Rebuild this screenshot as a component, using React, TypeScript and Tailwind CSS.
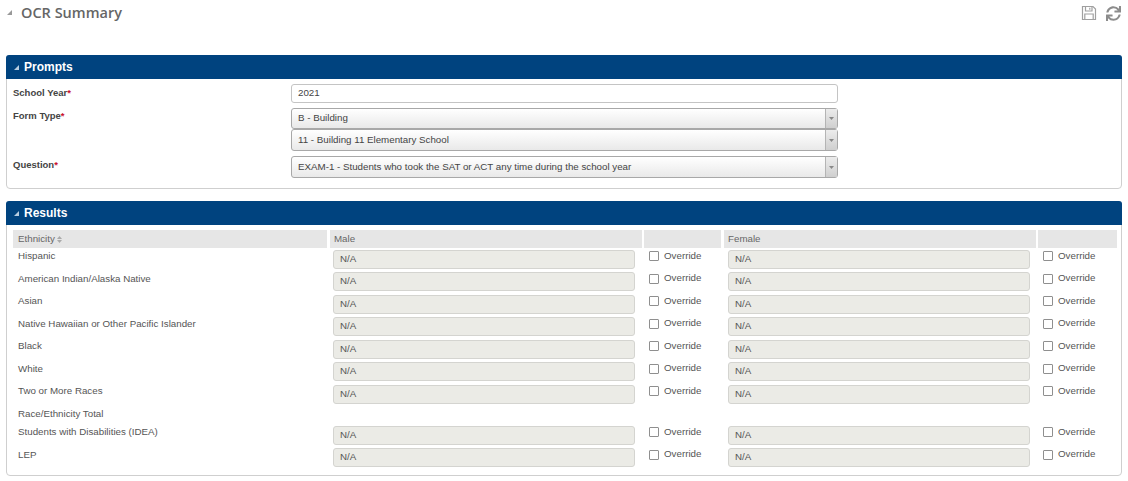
import { FaSync } from "react-icons/fa";

const rows = [
  { name: "Hispanic", inputs: true },
  { name: "American Indian/Alaska Native", inputs: true },
  { name: "Asian", inputs: true },
  { name: "Native Hawaiian or Other Pacific Islander", inputs: true },
  { name: "Black", inputs: true },
  { name: "White", inputs: true },
  { name: "Two or More Races", inputs: true },
  { name: "Race/Ethnicity Total", inputs: false },
  { name: "Students with Disabilities (IDEA)", inputs: true },
  { name: "LEP", inputs: true },
];

function Arrow({ color }: { color: string }) {
  return (
    <svg width="7" height="7" viewBox="0 0 7 7" className="shrink-0">
      <polygon points="6,1 6,6 1,6" fill={color} />
    </svg>
  );
}

function SaveIcon() {
  return (
    <svg width="16" height="16" viewBox="0 0 16 16" fill="none" stroke="#a0a0a0" strokeWidth="1.2">
      <path d="M1.5 1.5h10.5l2.5 2.5v10.5h-13z" />
      <path d="M4.5 1.5v4.5h6.5v-4.5" />
      <path d="M3.8 14.5v-5.5h8.4v5.5" />
      <path d="M8.8 2.8v2" />
    </svg>
  );
}

function Required({ label }: { label: string }) {
  return (
    <span className="text-[9.5px] font-bold text-[#444] leading-none">
      {label}
      <span className="text-[#c8102e]">*</span>
    </span>
  );
}

function Select({ value, className }: { value: string; className: string }) {
  return (
    <div
      className={`flex w-[547px] rounded-[3px] border border-[#a8a8a8] bg-gradient-to-b from-white to-[#e9e9e9] ${className}`}
    >
      <span className="flex-1 self-center pl-[6px] text-[9.75px] text-[#444]">{value}</span>
      <span className="flex w-[12px] items-center justify-center border-l border-[#b4b4b4] bg-gradient-to-b from-[#ececec] to-[#cfcfcf]">
        <svg width="5" height="3" viewBox="0 0 5 3">
          <polygon points="0,0 5,0 2.5,3" fill="#888" />
        </svg>
      </span>
    </div>
  );
}

function Panel({ title, className, children }: { title: string; className: string; children: React.ReactNode }) {
  return (
    <section className={`mx-[6px] rounded-[4px] border border-[#cfcfcf] ${className}`}>
      <div className="-mx-px -mt-px flex h-[24px] items-center gap-[4px] rounded-t-[3px] bg-[#00437f] pl-[7px]">
        <Arrow color="#b8cde0" />
        <h2 className="text-[12px] font-bold text-white">{title}</h2>
      </div>
      {children}
    </section>
  );
}

function ValueCell() {
  return (
    <div className="flex items-center pl-[6px]">
      <div className="flex h-[19px] w-[302px] items-center rounded-[3px] border border-[#d4d4d0] bg-[#ebebe6] pl-[6px] text-[9.75px] text-[#555]">
        N/A
      </div>
    </div>
  );
}

function OverrideCell() {
  return (
    <label className="-mt-[6px] flex items-center gap-[5px] pl-[6px] text-[9.75px] text-[#555]">
      <input
        type="checkbox"
        className="h-[10px] w-[10px] appearance-none rounded-[1px] border border-[#8f8f8f] bg-white"
      />
      Override
    </label>
  );
}

const gridCols = "grid grid-cols-[314px_316px_79px_315px_80px]";

export default function App() {
  return (
    <div className="h-[481px] w-[1128px] overflow-hidden bg-white font-['Liberation_Sans',sans-serif]">
      <header className="flex h-[55px] items-start justify-between pl-[6px] pr-[7px] pt-[2px]">
        <div className="flex items-center gap-[8px]">
          <Arrow color="#999" />
          <h1 className="font-['Open_Sans',sans-serif] text-[14.5px] font-semibold text-[#666]">OCR Summary</h1>
        </div>
        <div className="flex items-center gap-[9px] pt-[3px] text-[#8c8c8c]">
          <SaveIcon />
          <FaSync size={15} />
        </div>
      </header>

      <Panel title="Prompts" className="h-[134px]">
        <div className="grid grid-cols-[278px_1fr] pl-[6px] pt-[5px]">
          <div className="-mt-[1px] leading-none"><Required label="School Year" /></div>
          <div className="flex h-[19px] w-[547px] items-center rounded-[3px] border border-[#c4c4c4] bg-white pl-[6px] text-[9.75px] text-[#444]">
            2021
          </div>
          <div className="pt-[3px] leading-none"><Required label="Form Type" /></div>
          <div className="mt-[5px] flex flex-col">
            <Select value="B - Building" className="h-[21px]" />
            <Select value="11 - Building 11 Elementary School" className="h-[22px]" />
          </div>
          <div className="pt-[4px] leading-none"><Required label="Question" /></div>
          <Select
            value="EXAM-1 - Students who took the SAT or ACT any time during the school year"
            className="mt-[5px] h-[22px]"
          />
        </div>
      </Panel>

      <Panel title="Results" className="mt-[12px] h-[275px]">
        <div className="px-[6px] pt-[5px]">
          <div className={`${gridCols} h-[18px] text-[9.75px] text-[#666]`}>
            <div className="flex items-center gap-[2px] bg-[#e6e6e6] pl-[5px]">
              Ethnicity
              <svg width="5" height="7" viewBox="0 0 5 7">
                <polygon points="2.5,0 5,3 0,3" fill="#aaa" />
                <polygon points="0,4 5,4 2.5,7" fill="#aaa" />
              </svg>
            </div>
            <div className="ml-[3px] mr-[1px] flex items-center bg-[#e6e6e6] pl-[4px]">Male</div>
            <div className="mx-[1px] bg-[#e6e6e6]" />
            <div className="ml-[2px] mr-[1px] flex items-center bg-[#e6e6e6] pl-[4px]">Female</div>
            <div className="ml-[1px] bg-[#e6e6e6]" />
          </div>
          <div>
            {rows.map((row) =>
              row.inputs ? (
                <div key={row.name} className={`${gridCols} h-[22.5px]`}>
                  <div className="pl-[5px] pt-[1px] text-[9.75px] text-[#555]">{row.name}</div>
                  <ValueCell />
                  <OverrideCell />
                  <ValueCell />
                  <OverrideCell />
                </div>
              ) : (
                <div key={row.name} className="h-[18.5px] pl-[5px] pt-[1px] text-[9.75px] text-[#555]">
                  {row.name}
                </div>
              )
            )}
          </div>
        </div>
      </Panel>
    </div>
  );
}
